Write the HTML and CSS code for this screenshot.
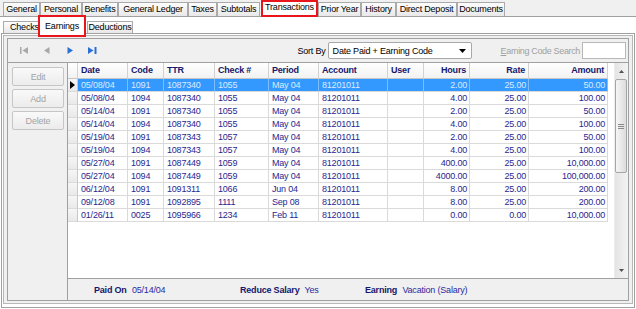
FILE: index.html
```html
<!DOCTYPE html>
<html>
<head>
<meta charset="utf-8">
<link rel="stylesheet" href="styles.css">
</head>
<body>
<div class="toptabs">
  <div class="tab t1">General</div>
  <div class="tab t2">Personal</div>
  <div class="tab t3">Benefits</div>
  <div class="tab t4">General Ledger</div>
  <div class="tab t5">Taxes</div>
  <div class="tab t6">Subtotals</div>
  <div class="tab t7 sel">Transactions</div>
  <div class="tab t8">Prior Year</div>
  <div class="tab t9">History</div>
  <div class="tab t10">Direct Deposit</div>
  <div class="tab t11">Documents</div>
</div>
<div class="subtabs">
  <div class="stab s1">Checks</div>
  <div class="stab s2 sel">Earnings</div>
  <div class="stab s3">Deductions</div>
</div>
<div class="frame">
  <div class="frame2">
    <div class="inner">
      <div class="toolbar">
        <div class="nav">
          <span><svg width="8" height="7" viewBox="0 0 8 7"><rect x="0" y="0" width="1.5" height="7" fill="#a8a8a8"/><path d="M8 0 L2.5 3.5 L8 7 Z" fill="#a8a8a8"/></svg></span>
          <span><svg width="6" height="7" viewBox="0 0 6 7"><path d="M5.5 0 L0 3.5 L5.5 7 Z" fill="#a8a8a8"/></svg></span>
          <span><svg width="6" height="7" viewBox="0 0 6 7"><path d="M0.5 0 L6 3.5 L0.5 7 Z" fill="#2a6fd6"/></svg></span>
          <span><svg width="9" height="7" viewBox="0 0 9 7"><path d="M0 0 L5.5 3.5 L0 7 Z" fill="#2a6fd6"/><rect x="6.5" y="0" width="2" height="7" fill="#2a6fd6"/></svg></span>
        </div>
        <span class="sortlbl">Sort By</span>
        <div class="combo"><span>Date Paid + Earning Code</span><svg class="dd" width="7" height="4" viewBox="0 0 7 4"><path d="M0 0 L7 0 L3.5 4 Z" fill="#000"/></svg></div>
        <span class="search"><u>E</u>arning Code Search</span>
        <div class="sinput"></div>
      </div>
      <div class="main">
        <div class="side">
          <button class="btn">Edit</button>
          <button class="btn">Add</button>
          <button class="btn">Delete</button>
        </div>
        <div class="gridwrap">
          <div class="grid">
            <div class="table">
              <div class="row head">
                <div class="c rh"></div>
                <div class="c">Date</div>
                <div class="c">Code</div>
                <div class="c">TTR</div>
                <div class="c">Check #</div>
                <div class="c">Period</div>
                <div class="c">Account</div>
                <div class="c">User</div>
                <div class="c r">Hours</div>
                <div class="c r">Rate</div>
                <div class="c r">Amount</div>
              </div>
              <div class="row sel">
                <div class="c rh"><svg width="5" height="8" viewBox="0 0 5 8"><path d="M0 0 L5 4 L0 8 Z" fill="#000"/></svg></div>
                <div class="c">05/08/04</div><div class="c">1091</div><div class="c">1087340</div><div class="c">1055</div><div class="c">May 04</div><div class="c">81201011</div><div class="c"></div><div class="c r">2.00</div><div class="c r">25.00</div><div class="c r">50.00</div>
              </div>
              <div class="row">
                <div class="c rh"></div>
                <div class="c">05/08/04</div><div class="c">1094</div><div class="c">1087340</div><div class="c">1055</div><div class="c">May 04</div><div class="c">81201011</div><div class="c"></div><div class="c r">4.00</div><div class="c r">25.00</div><div class="c r">100.00</div>
              </div>
              <div class="row">
                <div class="c rh"></div>
                <div class="c">05/14/04</div><div class="c">1091</div><div class="c">1087340</div><div class="c">1055</div><div class="c">May 04</div><div class="c">81201011</div><div class="c"></div><div class="c r">2.00</div><div class="c r">25.00</div><div class="c r">50.00</div>
              </div>
              <div class="row">
                <div class="c rh"></div>
                <div class="c">05/14/04</div><div class="c">1094</div><div class="c">1087340</div><div class="c">1055</div><div class="c">May 04</div><div class="c">81201011</div><div class="c"></div><div class="c r">4.00</div><div class="c r">25.00</div><div class="c r">100.00</div>
              </div>
              <div class="row">
                <div class="c rh"></div>
                <div class="c">05/19/04</div><div class="c">1091</div><div class="c">1087343</div><div class="c">1057</div><div class="c">May 04</div><div class="c">81201011</div><div class="c"></div><div class="c r">2.00</div><div class="c r">25.00</div><div class="c r">50.00</div>
              </div>
              <div class="row">
                <div class="c rh"></div>
                <div class="c">05/19/04</div><div class="c">1094</div><div class="c">1087343</div><div class="c">1057</div><div class="c">May 04</div><div class="c">81201011</div><div class="c"></div><div class="c r">4.00</div><div class="c r">25.00</div><div class="c r">100.00</div>
              </div>
              <div class="row">
                <div class="c rh"></div>
                <div class="c">05/27/04</div><div class="c">1091</div><div class="c">1087449</div><div class="c">1059</div><div class="c">May 04</div><div class="c">81201011</div><div class="c"></div><div class="c r">400.00</div><div class="c r">25.00</div><div class="c r">10,000.00</div>
              </div>
              <div class="row">
                <div class="c rh"></div>
                <div class="c">05/27/04</div><div class="c">1094</div><div class="c">1087449</div><div class="c">1059</div><div class="c">May 04</div><div class="c">81201011</div><div class="c"></div><div class="c r">4000.00</div><div class="c r">25.00</div><div class="c r">100,000.00</div>
              </div>
              <div class="row">
                <div class="c rh"></div>
                <div class="c">06/12/04</div><div class="c">1091</div><div class="c">1091311</div><div class="c">1066</div><div class="c">Jun 04</div><div class="c">81201011</div><div class="c"></div><div class="c r">8.00</div><div class="c r">25.00</div><div class="c r">200.00</div>
              </div>
              <div class="row">
                <div class="c rh"></div>
                <div class="c">09/12/08</div><div class="c">1091</div><div class="c">1092895</div><div class="c">1111</div><div class="c">Sep 08</div><div class="c">81201011</div><div class="c"></div><div class="c r">8.00</div><div class="c r">25.00</div><div class="c r">200.00</div>
              </div>
              <div class="row">
                <div class="c rh"></div>
                <div class="c">01/26/11</div><div class="c">0025</div><div class="c">1095966</div><div class="c">1234</div><div class="c">Feb 11</div><div class="c">81201011</div><div class="c"></div><div class="c r">0.00</div><div class="c r">0.00</div><div class="c r">10,000.00</div>
              </div>
            </div>
            <div class="vs">
              <div class="arr"><svg width="5" height="3" viewBox="0 0 5 3"><path d="M0 3 L2.5 0 L5 3 Z" fill="#505050"/></svg></div>
              <div class="thumb"><div class="grip"><i></i><i></i><i></i></div></div>
              <div class="track"></div>
              <div class="arr"><svg width="5" height="3" viewBox="0 0 5 3"><path d="M0 0 L5 0 L2.5 3 Z" fill="#505050"/></svg></div>
            </div>
          </div>
          <div class="info">
            <div><b>Paid On</b> <span>05/14/04</span></div>
            <div><b>Reduce Salary</b> <span>Yes</span></div>
            <div><b>Earning</b> <span>Vacation (Salary)</span></div>
          </div>
        </div>
      </div>
    </div>
  </div>
</div>
</body>
</html>
```
FILE: styles.css
```css
* { box-sizing: border-box; }
html, body { margin: 0; padding: 0; }
body {
  width: 636px;
  height: 309px;
  overflow: hidden;
  background: #fff;
  font-family: "Liberation Sans", Arial, sans-serif;
  font-size: 9px;
  letter-spacing: -0.2px;
  color: #000;
}

/* top tabs */
.toptabs {
  display: flex;
  align-items: flex-end;
  height: 17px;
  padding-left: 3px;
  background: #f0f0f0;
  border-bottom: 1px solid #a0a0a0;
}
.tab {
  height: 14px;
  border: 1px solid #aaaaaa;
  border-bottom: none;
  background: linear-gradient(#fdfdfd, #e8e8e8);
  text-align: center;
  line-height: 12px;
  white-space: nowrap;
  overflow: hidden;
}
.t1 { width: 37px; }
.t2 { width: 42px; }
.t3 { width: 36px; }
.t4 { width: 70px; }
.t5 { width: 29px; }
.t6 { width: 43px; margin-right: 1px; }
.t7 { width: 57px; }
.t8 { width: 43px; }
.t9 { width: 35px; }
.t10 { width: 61px; }
.t11 { width: 48px; }
.tab.sel {
  height: 17px;
  margin-bottom: -1px;
  background: #fff;
  border: 2px solid #e8161c;
  line-height: 11px;
  position: relative;
  z-index: 1;
}

/* sub tabs */
.subtabs {
  display: flex;
  align-items: flex-end;
  height: 16px;
  padding-left: 3px;
}
.stab {
  height: 12px;
  border: 1px solid #aaaaaa;
  border-bottom: none;
  background: linear-gradient(#fdfdfd, #e8e8e8);
  line-height: 11px;
  text-align: center;
  white-space: nowrap;
  overflow: hidden;
}
.s1 { width: 37px; text-align: left; padding-left: 6px; }
.s2 { width: 48px; }
.s3 { width: 46px; margin-left: 1px; }
.stab.sel {
  height: 22px;
  margin-bottom: -4px;
  margin-left: -2px;
  border: 2px solid #e8161c;
  background: #fff;
  line-height: 14px;
  padding-top: 2px;
  position: relative;
  z-index: 2;
}

/* frame */
.frame {
  margin-left: 1px;
  width: 634px;
  height: 275px;
  border: 1px solid #a0a0a0;
  padding: 1px 1px 3px 1px;
  background: #fff;
}
.frame2 {
  height: 100%;
  border: 1px solid #b8b8b8;
  background: #f0f0f0;
  padding: 2px 3px;
}
.inner {
  height: 100%;
  border: 1px solid #a0a0a0;
  display: flex;
  flex-direction: column;
}

/* toolbar */
.toolbar {
  height: 24px;
  flex: none;
  border-bottom: 1px solid #a0a0a0;
  display: flex;
  align-items: center;
  padding: 0 2px 0 4px;
}
.nav { display: flex; }
.nav span {
  width: 23px;
  height: 10px;
  display: flex;
  align-items: center;
  justify-content: center;
}
.sortlbl { margin-left: auto; margin-right: 2px; }
.combo {
  width: 144px;
  height: 17px;
  border: 1px solid #a8a8a8;
  border-radius: 2px;
  background: #fff;
  display: flex;
  align-items: center;
  padding-left: 4px;
}
.combo .dd { margin-left: auto; margin-right: 5px; }
.search { color: #a0a0a0; margin-left: 29px; letter-spacing: -0.35px; }
.sinput {
  width: 44px;
  height: 17px;
  border: 1px solid #b8b8b8;
  background: #fff;
  margin-left: 2px;
}

/* main */
.main { flex: 1; display: flex; }
.side {
  width: 60px;
  flex: none;
  border-right: 1px solid #a0a0a0;
  padding: 4px 0 0 4px;
  display: flex;
  flex-direction: column;
  gap: 3px;
}
.btn {
  width: 52px;
  height: 19px;
  margin: 0;
  padding: 0;
  border: 1px solid #c6c6c6;
  border-radius: 2px;
  background: linear-gradient(#f9f9f9, #ececec);
  color: #a3a3a3;
  font: inherit;
  letter-spacing: inherit;
  text-align: center;
}
.gridwrap { flex: 1; display: flex; flex-direction: column; }
.grid { height: 215px; flex: none; background: #fff; display: flex; }
.table { width: 540px; flex: none; }
.row {
  display: grid;
  grid-template-columns: 10px 50px 36px 51px 54px 50px 69px 36px 46px 59px 79px;
  height: 13px;
}
.c {
  border-right: 1px solid #dadada;
  border-bottom: 1px solid #dadada;
  line-height: 12px;
  padding-left: 3px;
  color: #27278f;
  white-space: nowrap;
  overflow: hidden;
}
.c.r { text-align: right; padding-left: 0; padding-right: 2px; }
.c.rh {
  padding: 0;
  background: linear-gradient(#f6f6f6, #e9e9e9);
  border-right: 1px solid #c8c8c8;
  display: flex;
  align-items: center;
  justify-content: center;
}
.row.head { height: 16px; }
.row.head .c {
  line-height: 15px;
  font-weight: bold;
  color: #17176c;
  background: linear-gradient(#ffffff, #f2f2f2);
  border-right: 1px solid #d2d2d2;
  border-bottom: 1px solid #c6c6c6;
}
.row.head .c.r { padding-right: 3px; }
.row.sel .c:not(.rh) {
  background: #3399ff;
  color: #dbeaff;
  border-right-color: #80bdff;
}
.vs {
  width: 14px;
  margin-left: auto;
  display: flex;
  flex-direction: column;
  background: linear-gradient(to right, #e4e4e4, #f3f3f3);
  border-left: 1px solid #ececec;
}
.arr {
  height: 16px;
  flex: none;
  display: flex;
  align-items: center;
  justify-content: center;
}
.thumb {
  height: 94px;
  flex: none;
  margin: 0 1px 0 0;
  border: 1px solid #a6a6a6;
  border-radius: 2px;
  background: linear-gradient(to right, #f6f6f6, #dcdcdc);
  display: flex;
  align-items: center;
  justify-content: center;
}
.grip { display: flex; flex-direction: column; gap: 1px; }
.grip i { display: block; width: 6px; height: 1px; background: #8a8a8a; }
.track { flex: 1; }

.info {
  flex: 1;
  border-top: 1px solid #a0a0a0;
  display: grid;
  grid-template-columns: 146px 125px 1fr;
  align-items: center;
  padding-left: 26px;
  color: #2a2aa0;
}
.info b { color: #17176c; margin-right: 3px; }
```
